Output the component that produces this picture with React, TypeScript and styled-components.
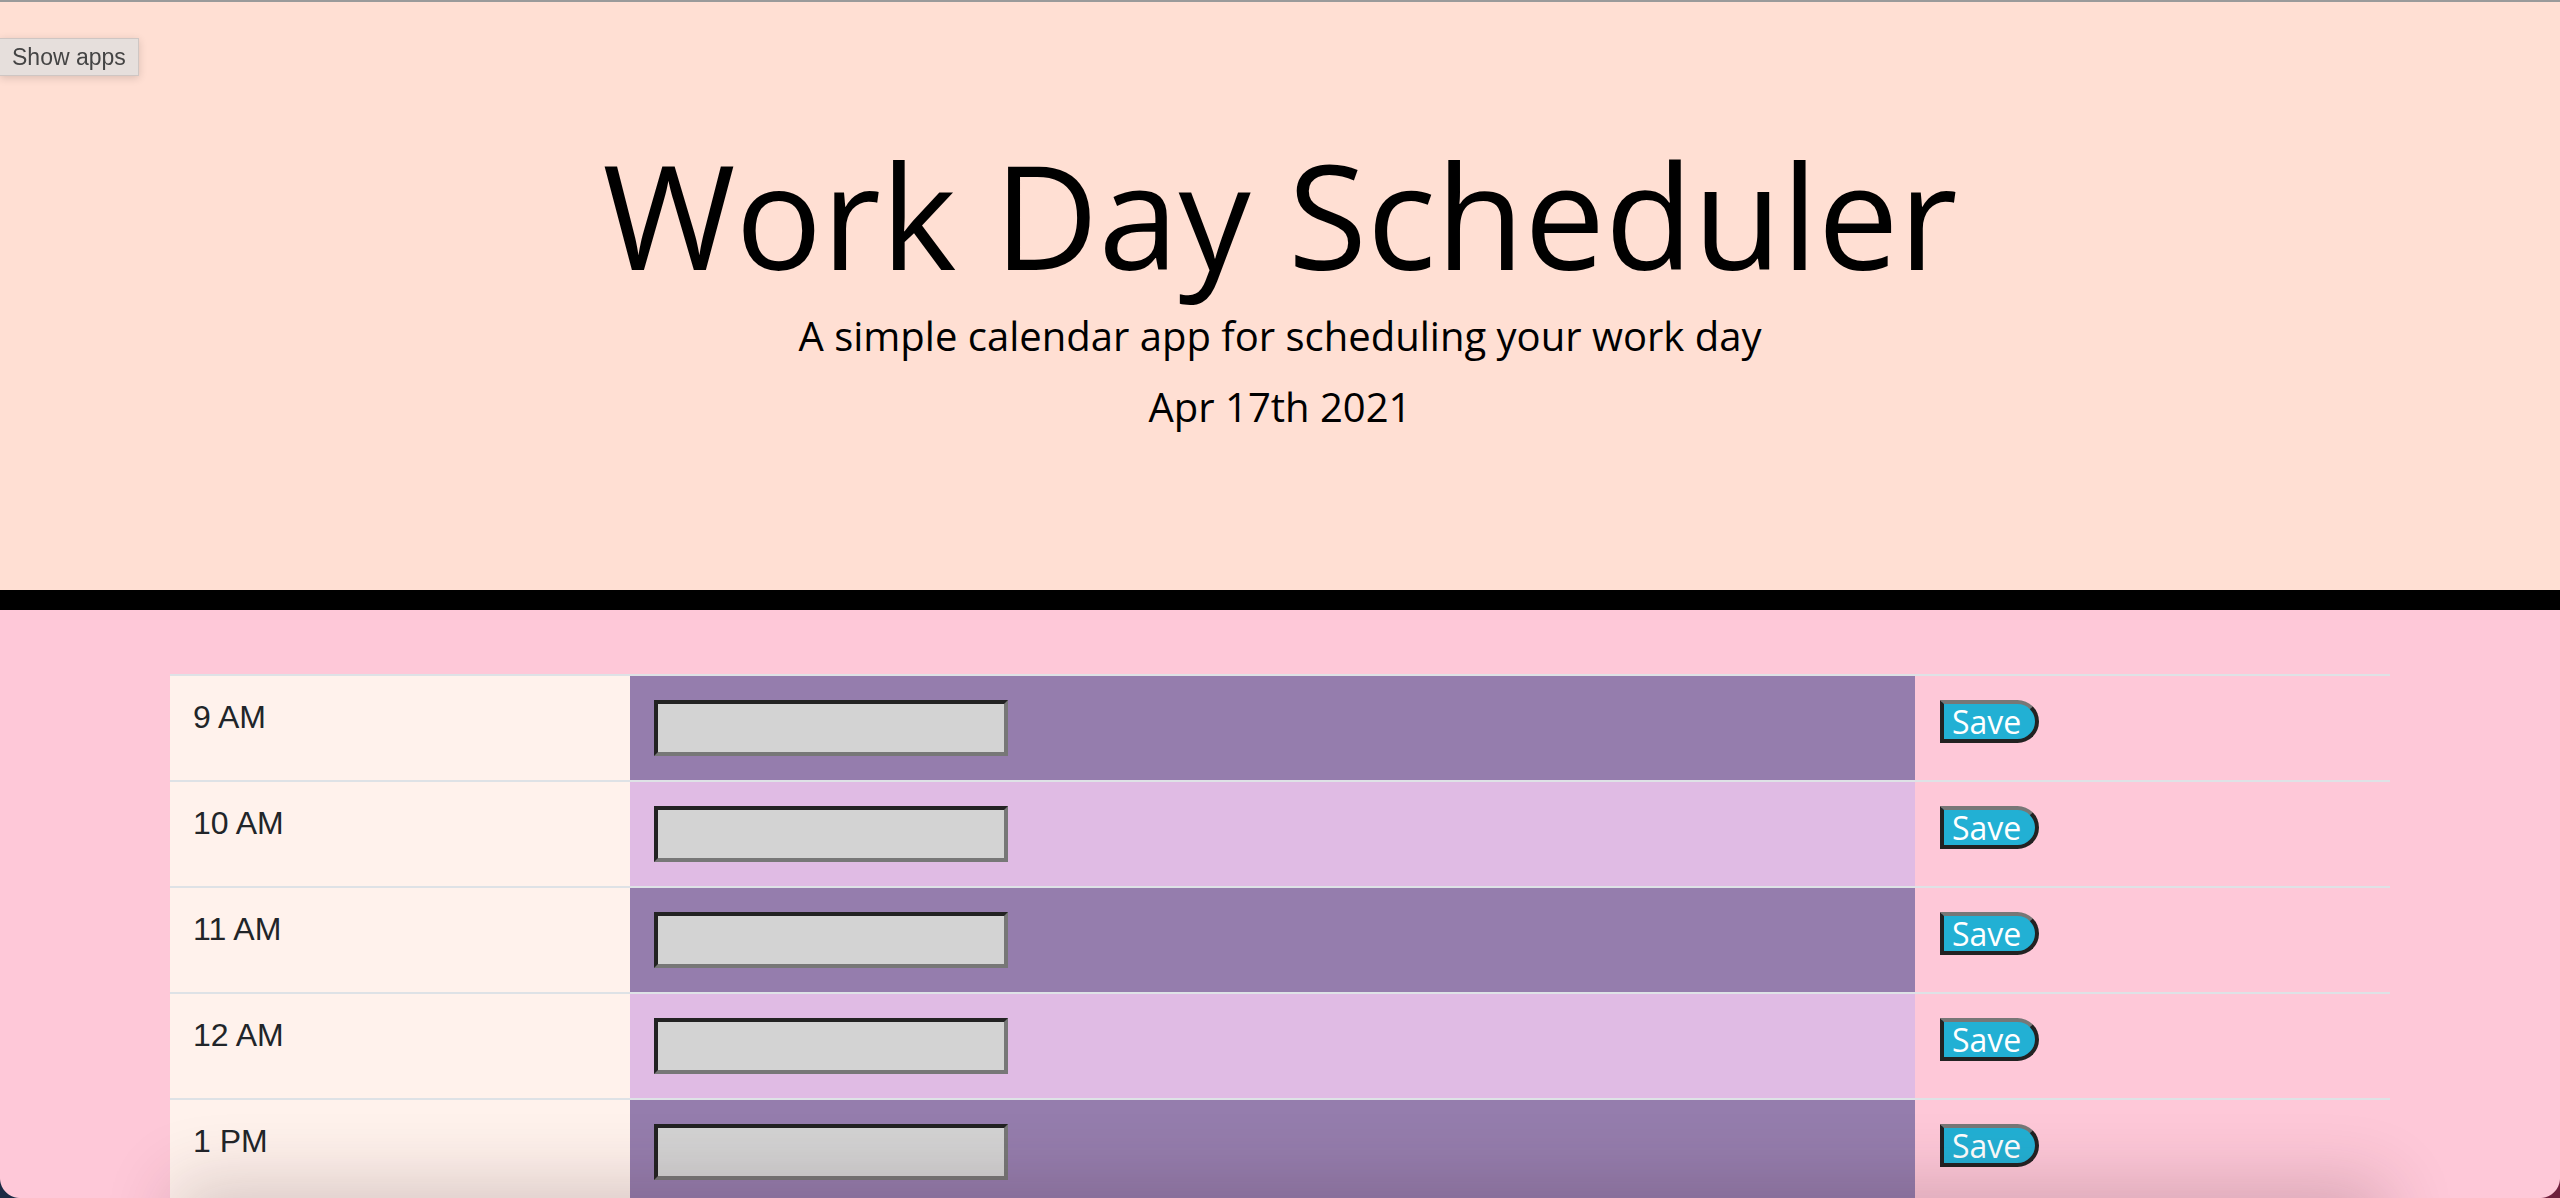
import React from "react";
import styled, { createGlobalStyle } from "styled-components";

const Global = createGlobalStyle`
  html, body { margin: 0; padding: 0; }
  body {
    background: #fec8d8;
    font-family: "Open Sans", "Liberation Sans", sans-serif;
    color: #212529;
    overflow: hidden;
  }
  * { box-sizing: border-box; }
`;

const Page = styled.div`
  min-height: 1198px;
  background: #fec8d8;
  border-top: 2px solid #9a9a9a;
`;

const Header = styled.header`
  background: #ffdfd3;
  border-bottom: 20px solid #000;
  padding: 126px 32px 0;
  height: 608px;
  display: flex;
  flex-direction: column;
  align-items: center;
  text-align: center;
`;

const Title = styled.h1`
  margin: 0;
  font-family: "Open Sans", sans-serif;
  font-weight: 400;
  font-size: 144px;
  line-height: 172px;
  color: #000;
`;

const Lead = styled.p<{ $gap: number }>`
  margin: ${(p) => p.$gap}px 0 0;
  font-family: "Open Sans", sans-serif;
  font-size: 40px;
  line-height: 60px;
  color: #000;
`;

const Timeline = styled.main`
  width: calc(100% - 340px);
  margin: 64px auto 0;
  display: flex;
  flex-direction: column;
`;

const Row = styled.div`
  display: grid;
  grid-template-columns: 460px 1fr 475px;
  border-top: 2px solid #dee2e6;
  height: 106px;
`;

const Hour = styled.div`
  background: #fff2ec;
  padding: 17px 23px;
  font-family: "Liberation Sans", Arial, sans-serif;
  font-size: 32px;
  line-height: 48px;
  color: #212529;
`;

const Slot = styled.div<{ $dark: boolean }>`
  background: ${(p) => (p.$dark ? "#957dad" : "#e0bbe4")};
  padding: 24px;
`;

const Entry = styled.textarea`
  display: block;
  width: 354px;
  height: 56px;
  margin: 0;
  background: #d3d3d3;
  border: 4px solid;
  border-color: #222 #777 #777 #222;
  resize: none;
  outline: none;
  font-family: "Liberation Mono", monospace;
  font-size: 26px;
`;

const SaveCell = styled.div`
  padding: 24px 25px;
`;

const SaveButton = styled.button`
  height: 43px;
  width: 99px;
  padding: 0 0 0 8px;
  text-align: left;
  background: #22b0d4;
  color: #fff;
  border: 4px solid;
  border-color: #777 #222 #222 #222;
  border-radius: 0 22px 22px 0;
  font-family: "Open Sans", sans-serif;
  font-size: 32px;
  line-height: 33px;
  cursor: pointer;
`;

const AppsButton = styled.button`
  position: fixed;
  top: 38px;
  left: 0;
  height: 38px;
  padding: 0 12px;
  background: #e6dfdc;
  border: 1px solid #cfc6c3;
  border-left: none;
  box-shadow: 0 2px 8px rgba(0, 0, 0, 0.15);
  font-family: "Liberation Sans", Arial, sans-serif;
  font-size: 23px;
  color: #444;
`;

const BottomShade = styled.div`
  position: fixed;
  left: 190px;
  right: 190px;
  top: 100%;
  height: 80px;
  box-shadow: 0 0 70px 16px rgba(60, 30, 40, 0.2);
  pointer-events: none;
`;

const Corner = styled.div<{ $side: "left" | "right"; $color: string }>`
  position: fixed;
  bottom: 0;
  ${(p) => p.$side}: 0;
  width: 20px;
  height: 20px;
  pointer-events: none;
  background: radial-gradient(
    circle at ${(p) => (p.$side === "left" ? "top right" : "top left")},
    transparent 19.5px,
    ${(p) => p.$color} 20.5px
  );
`;

const hours = ["9 AM", "10 AM", "11 AM", "12 AM", "1 PM", "2 PM", "3 PM", "4 PM", "5 PM"];

export default function App() {
  return (
    <>
      <Global />
      <Page>
        <Header>
          <Title>Work Day Scheduler</Title>
          <Lead $gap={6}>A simple calendar app for scheduling your work day</Lead>
          <Lead $gap={11}>Apr 17th 2021</Lead>
        </Header>
        <Timeline>
          {hours.map((h, i) => (
            <Row key={h}>
              <Hour>{h}</Hour>
              <Slot $dark={i % 2 === 0}>
                <Entry />
              </Slot>
              <SaveCell>
                <SaveButton>Save</SaveButton>
              </SaveCell>
            </Row>
          ))}
        </Timeline>
      </Page>
      <AppsButton>Show apps</AppsButton>
      <BottomShade />
      <Corner $side="left" $color="#1b2a44" />
      <Corner $side="right" $color="#6e1f3c" />
    </>
  );
}
